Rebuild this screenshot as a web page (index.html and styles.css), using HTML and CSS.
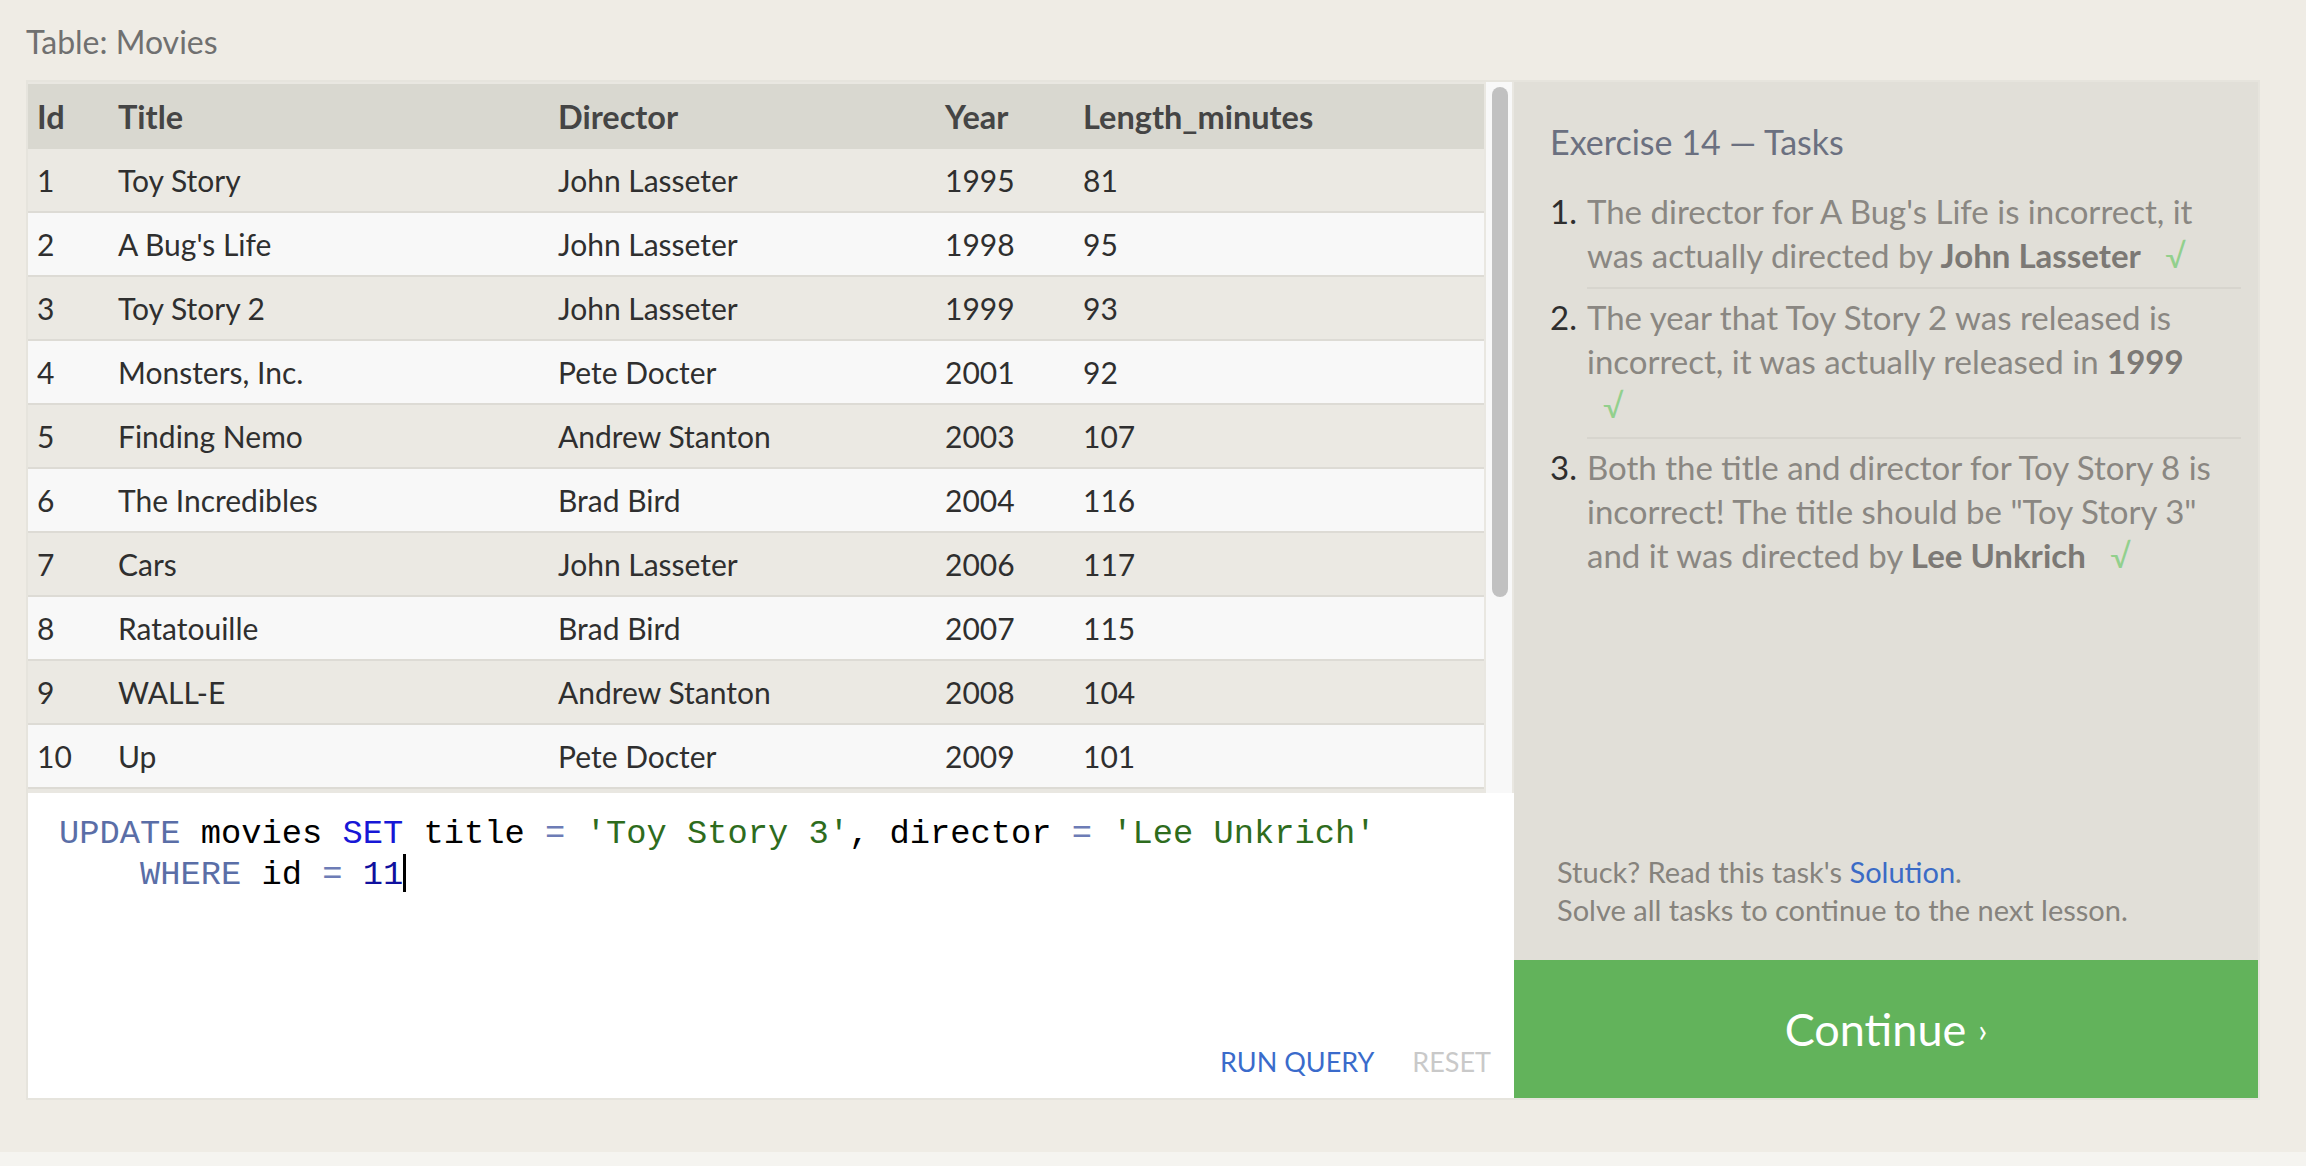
FILE: index.html
```html
<!DOCTYPE html>
<html>
<head>
<meta charset="utf-8">
<title>SQL Lesson</title>
<link rel="stylesheet" href="styles.css">
</head>
<body>
<div class="page">
  <div class="table-title">Table: Movies</div>
  <div class="main">
    <div class="left">
      <div class="table-area">
        <div class="table">
          <div class="row head"><div>Id</div><div>Title</div><div>Director</div><div>Year</div><div>Length_minutes</div></div>
          <div class="row odd"><div>1</div><div>Toy Story</div><div>John Lasseter</div><div>1995</div><div>81</div></div>
          <div class="row even"><div>2</div><div>A Bug's Life</div><div>John Lasseter</div><div>1998</div><div>95</div></div>
          <div class="row odd"><div>3</div><div>Toy Story 2</div><div>John Lasseter</div><div>1999</div><div>93</div></div>
          <div class="row even"><div>4</div><div>Monsters, Inc.</div><div>Pete Docter</div><div>2001</div><div>92</div></div>
          <div class="row odd"><div>5</div><div>Finding Nemo</div><div>Andrew Stanton</div><div>2003</div><div>107</div></div>
          <div class="row even"><div>6</div><div>The Incredibles</div><div>Brad Bird</div><div>2004</div><div>116</div></div>
          <div class="row odd"><div>7</div><div>Cars</div><div>John Lasseter</div><div>2006</div><div>117</div></div>
          <div class="row even"><div>8</div><div>Ratatouille</div><div>Brad Bird</div><div>2007</div><div>115</div></div>
          <div class="row odd"><div>9</div><div>WALL-E</div><div>Andrew Stanton</div><div>2008</div><div>104</div></div>
          <div class="row even"><div>10</div><div>Up</div><div>Pete Docter</div><div>2009</div><div>101</div></div>
        </div>
        <div class="scroll-track"><div class="scroll-thumb"></div></div>
      </div>
      <div class="editor">
        <div class="code"><span class="kw">UPDATE</span> movies <span class="kw2">SET</span> title <span class="op">=</span> <span class="str">'Toy Story 3'</span>, director <span class="op">=</span> <span class="str">'Lee Unkrich'</span>
    <span class="kw">WHERE</span> id <span class="op">=</span> <span class="num">11</span><span class="cursor"></span></div>
        <div class="editor-actions">
          <span class="run">RUN QUERY</span>
          <span class="reset">RESET</span>
        </div>
      </div>
    </div>
    <div class="right">
      <div class="ex-title">Exercise 14 — Tasks</div>
      <ol class="tasks">
        <li><span class="n">1.</span><div class="t">The director for A Bug's Life is incorrect, it was actually directed by <b>John Lasseter</b> <span class="check">√</span></div></li>
        <li><span class="n">2.</span><div class="t">The year that Toy Story 2 was released is incorrect, it was actually released in <b>1999</b> <span class="check">√</span></div></li>
        <li><span class="n">3.</span><div class="t">Both the title and director for Toy Story 8 is incorrect! The title should be "Toy Story 3" and it was directed by <b>Lee Unkrich</b> <span class="check">√</span></div></li>
      </ol>
      <div class="spacer"></div>
      <div class="stuck">
        <div>Stuck? Read this task's <a class="sol">Solution</a>.</div>
        <div>Solve all tasks to continue to the next lesson.</div>
      </div>
      <div class="continue">Continue <span class="arrow">›</span></div>
    </div>
  </div>
</div>
<div class="footer-strip"></div>
</body>
</html>
```
FILE: styles.css
```css
html { background: #f5f4f0; }
body {
  margin: 0;
  font-family: "Lato", "Open Sans", sans-serif;
  color: #333;
}
.page {
  height: 1152px;
  background: #efece5;
  box-sizing: border-box;
  padding: 22px 0 0 26px;
}
.footer-strip { height: 14px; background: #f5f4f0; }

.table-title {
  font-size: 32px;
  line-height: 40px;
  color: #707070;
  margin-bottom: 18px;
}

.main {
  display: flex;
  width: 2234px;
  height: 1020px;
  box-sizing: border-box;
  border: 2px solid #e6e4dd;
}

.left {
  width: 1486px;
  display: flex;
  flex-direction: column;
}

.table-area {
  height: 711px;
  box-sizing: border-box;
  padding-top: 2px;
  background: #e9e7e1;
  display: flex;
}
.table { width: 1456px; }
.row {
  display: grid;
  grid-template-columns: 81px 440px 387px 138px 410px;
  height: 64px;
  box-sizing: border-box;
  border-bottom: 2px solid #dddbd5;
  font-size: 30px;
  color: #2f2f2f;
}
.row > div {
  display: flex;
  align-items: center;
  padding-left: 9px;
  white-space: nowrap;
}
.row.head {
  height: 65px;
  background: #d9d8d0;
  border-bottom: none;
  font-weight: 700;
  font-size: 32.5px;
  color: #454545;
}
.row.odd { background: #ebe9e3; }
.row.even { background: #f8f8f8; }

.scroll-track {
  width: 26px;
  margin-left: 2px;
  margin-top: -2px;
  background: #f8f8f8;
  padding: 5px 4px 0 6px;
  box-sizing: border-box;
}
.scroll-thumb {
  width: 16px;
  height: 510px;
  border-radius: 8px;
  background: #c1c1c1;
}

.editor {
  flex: 1;
  background: #fff;
  display: flex;
  flex-direction: column;
  padding: 21px 23px 18px 31px;
}
.code {
  flex: 1;
  font-family: "Liberation Mono", "Courier New", monospace;
  font-size: 33.75px;
  line-height: 40px;
  white-space: pre;
  color: #000;
}
.kw { color: #5a6ea7; }
.kw2 { color: #1717d6; }
.op { color: #6d7cb6; }
.str { color: #2e6c1d; }
.num { color: #10109e; }
.cursor {
  display: inline-block;
  width: 3px;
  height: 38px;
  background: #000;
  vertical-align: -8px;
}
.editor-actions {
  display: flex;
  justify-content: flex-end;
  gap: 38px;
  font-size: 27px;
  line-height: 36px;
}
.run { color: #3a6bcb; }
.reset { color: #c9c9c9; }

.right {
  flex: 1;
  background: #e1dfd8;
  display: flex;
  flex-direction: column;
  padding-top: 38px;
}
.ex-title {
  font-size: 34px;
  line-height: 44px;
  color: #6b7080;
  padding-left: 36px;
  margin-bottom: 19px;
}
.tasks {
  list-style: none;
  margin: 0;
  padding: 0 17px 0 36px;
}
.tasks li {
  display: flex;
  font-size: 33px;
  line-height: 44px;
}
.tasks .n {
  width: 37px;
  flex: none;
  padding-top: 6px;
  color: #2e2e2e;
}
.tasks .t {
  flex: 1;
  padding: 6px 0 10px;
  border-bottom: 2px solid #d7d5ce;
  color: #8a8782;
}
.tasks li:last-child .t { border-bottom: none; }
.tasks b { color: #7c7975; font-weight: 700; }
.check {
  display: inline-block;
  margin-left: 16px;
  padding-right: 24px;
  color: #92d08d;
  font-size: 33px;
}
.spacer { flex: 1; }
.stuck {
  padding-left: 43px;
  font-size: 29px;
  line-height: 38px;
  color: #86837d;
  margin-bottom: 31px;
}
.sol { color: #3b6bc6; }
.continue {
  height: 138px;
  background: #62b35b;
  color: #fff;
  font-size: 45px;
  display: flex;
  align-items: center;
  justify-content: center;
  gap: 12px;
}
.continue .arrow { font-size: 32px; }
```
